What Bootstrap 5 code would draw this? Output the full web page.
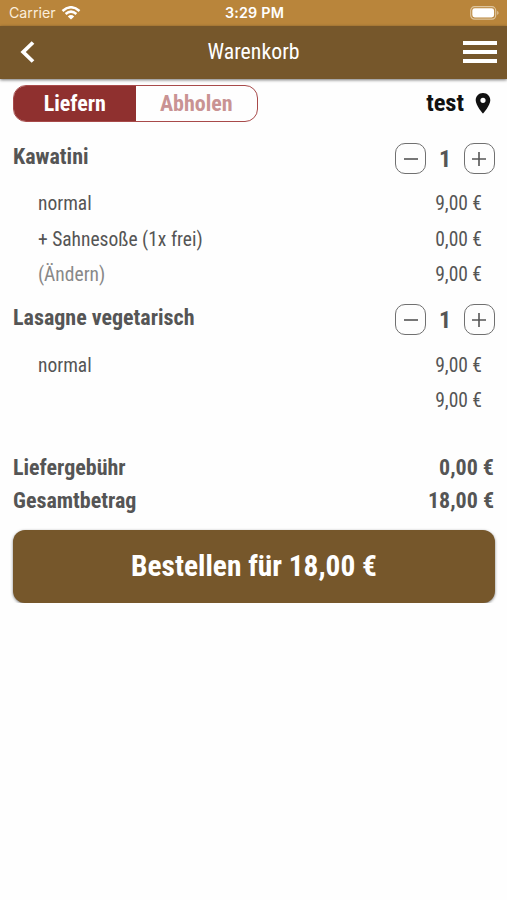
<!DOCTYPE html>
<html lang="de">
<head>
<meta charset="utf-8">
<meta name="viewport" content="width=device-width, initial-scale=1">
<title>Warenkorb</title>
<link rel="stylesheet" href="https://cdn.jsdelivr.net/npm/bootstrap@5.3.0/dist/css/bootstrap.min.css">
<style>
body{font-family:"Roboto Condensed",Roboto,sans-serif;font-stretch:75%;color:#555;background:#fefefe;line-height:1;font-size:19.5px}
.status-bar{height:25.5px;background:#b9853b;color:#fff;font:14.3px/26px Inter,sans-serif;font-stretch:100%;padding:1px 7px 0 9px}
.status-side{width:87px}
.carrier{color:#fbeedb;font-size:14.2px}
.clock{font-weight:600;letter-spacing:.2px}
.title-bar{height:53.5px;background:#76572b;color:#fff;padding:0 10px 1.5px 20px;box-shadow:0 1px 3px rgba(0,0,0,.55)}
.back-side{width:24px}
.title-text{font-size:21.8px}
.page{padding:6px 12px 0 13px}
.mode-switch{width:245px;height:37px;border:1px solid #a84a4a;border-radius:13px;overflow:hidden;font-size:22px;font-weight:700}
.mode-on{background:#8f302f;color:#fff}
.mode-off{color:#c99393}
.place{font-size:24.5px;font-weight:700;color:#111;padding-right:4px;gap:11px}
.dishes{padding-top:21px;gap:12px}
.dish{height:43.3px;font-size:22px;font-weight:700}
.dish-name{padding-top:2.5px}
.stepper{width:100px}
.step{width:31px;height:31px;border:1.3px solid #707070;border-radius:10px;background:none;padding:0}
.qty{font-size:24px}
.lines{padding:0 13px 0 25px}
.line{height:35.4px}
.edit{color:#888}
.sums{padding:32.5px 1px 13px 0}
.sum{height:33px;font-size:22px;font-weight:700}
.order{height:73px;border-radius:12px;background:#76572b;color:#fff;font-size:29.4px;font-weight:700;border:0;box-shadow:0 1px 3px rgba(0,0,0,.5)}
</style>
</head>
<body>
<header>
<div class="status-bar d-flex justify-content-between align-items-center">
<div class="status-side d-flex align-items-center gap-1"><span class="carrier">Carrier</span>
<svg class="flex-shrink-0" width="21" height="14" viewBox="-1 0 21 14" fill="none" stroke="#fff" stroke-width="2.5"><path d="M1.5 5Q10-2.5 18.5 5M4.6 8Q10 3.2 15.4 8"/><path d="M10 13.5L6.8 10.4Q10 7.6 13.2 10.4Z" fill="#fff" stroke="none"/></svg></div>
<span class="clock">3:29 PM</span>
<div class="status-side d-flex justify-content-end"><svg width="30" height="14" viewBox="0 0 30 14"><rect x=".7" y=".7" width="25" height="12.4" rx="3.8" fill="none" stroke="#dec59d" stroke-width="1.2"/><rect x="2.3" y="2.3" width="21.8" height="9.2" rx="2.4" fill="#fff"/><path d="M27.2 4.7Q30 6.9 27.2 9.1Z" fill="#dec59d"/></svg></div>
</div>
<nav class="title-bar d-flex justify-content-between align-items-center">
<div class="back-side"><svg class="d-block" width="15" height="22" viewBox="0 0 15 22"><path d="M13 1.5L3.2 11L13 20.5" fill="none" stroke="#fff" stroke-width="3.8"/></svg></div>
<span class="title-text">Warenkorb</span>
<svg class="d-block" width="34" height="24" viewBox="0 0 34 24" fill="#fff"><path d="M0 1h34v4H0zM0 10h34v4H0zM0 19h34v4H0z"/></svg>
</nav>
</header>
<main class="page">
<div class="d-flex justify-content-between align-items-center">
<div class="mode-switch d-flex"><div class="mode-on w-50 d-flex align-items-center justify-content-center"><span>Liefern</span></div><div class="mode-off w-50 d-flex align-items-center justify-content-center"><span>Abholen</span></div></div>
<div class="place d-flex align-items-center"><span>test</span><svg width="16" height="21" viewBox="0 0 16 21"><path fill="#111" fill-rule="evenodd" d="M8 0C3.5 0 .7 3.3.7 7.2C.7 12.5 8 20.5 8 20.5S15.3 12.5 15.3 7.2C15.3 3.3 12.5 0 8 0ZM8 4.7A2.6 2.6 0 1 1 8 9.9A2.6 2.6 0 1 1 8 4.7Z"/></svg></div>
</div>
<div class="dishes d-flex flex-column">
<section>
<div class="dish d-flex justify-content-between align-items-start"><span class="dish-name">Kawatini</span>
<div class="stepper d-flex justify-content-between align-items-center"><button class="step d-flex align-items-center justify-content-center"><svg width="14" height="14"><path d="M0 7H14" stroke="#555" stroke-width="1.6"/></svg></button><span class="qty">1</span><button class="step d-flex align-items-center justify-content-center"><svg width="14" height="14"><path d="M0 7H14M7 0V14" stroke="#555" stroke-width="1.6"/></svg></button></div></div>
<div class="lines">
<div class="line d-flex justify-content-between align-items-center"><span>normal</span><span>9,00 €</span></div>
<div class="line d-flex justify-content-between align-items-center"><span>+ Sahnesoße (1x frei)</span><span>0,00 €</span></div>
<div class="line d-flex justify-content-between align-items-center"><span class="edit">(Ändern)</span><span>9,00 €</span></div>
</div>
</section>
<section>
<div class="dish d-flex justify-content-between align-items-start"><span class="dish-name">Lasagne vegetarisch</span>
<div class="stepper d-flex justify-content-between align-items-center"><button class="step d-flex align-items-center justify-content-center"><svg width="14" height="14"><path d="M0 7H14" stroke="#555" stroke-width="1.6"/></svg></button><span class="qty">1</span><button class="step d-flex align-items-center justify-content-center"><svg width="14" height="14"><path d="M0 7H14M7 0V14" stroke="#555" stroke-width="1.6"/></svg></button></div></div>
<div class="lines">
<div class="line d-flex justify-content-between align-items-center"><span>normal</span><span>9,00 €</span></div>
<div class="line d-flex justify-content-end align-items-center"><span>9,00 €</span></div>
</div>
</section>
</div>
<section class="sums">
<div class="sum d-flex justify-content-between align-items-center"><span>Liefergebühr</span><span>0,00 €</span></div>
<div class="sum d-flex justify-content-between align-items-center"><span>Gesamtbetrag</span><span>18,00 €</span></div>
</section>
<button class="order w-100 d-block">Bestellen für 18,00 €</button>
</main>
<script src="https://cdn.jsdelivr.net/npm/bootstrap@5.3.0/dist/js/bootstrap.bundle.min.js"></script>
</body>
</html>
